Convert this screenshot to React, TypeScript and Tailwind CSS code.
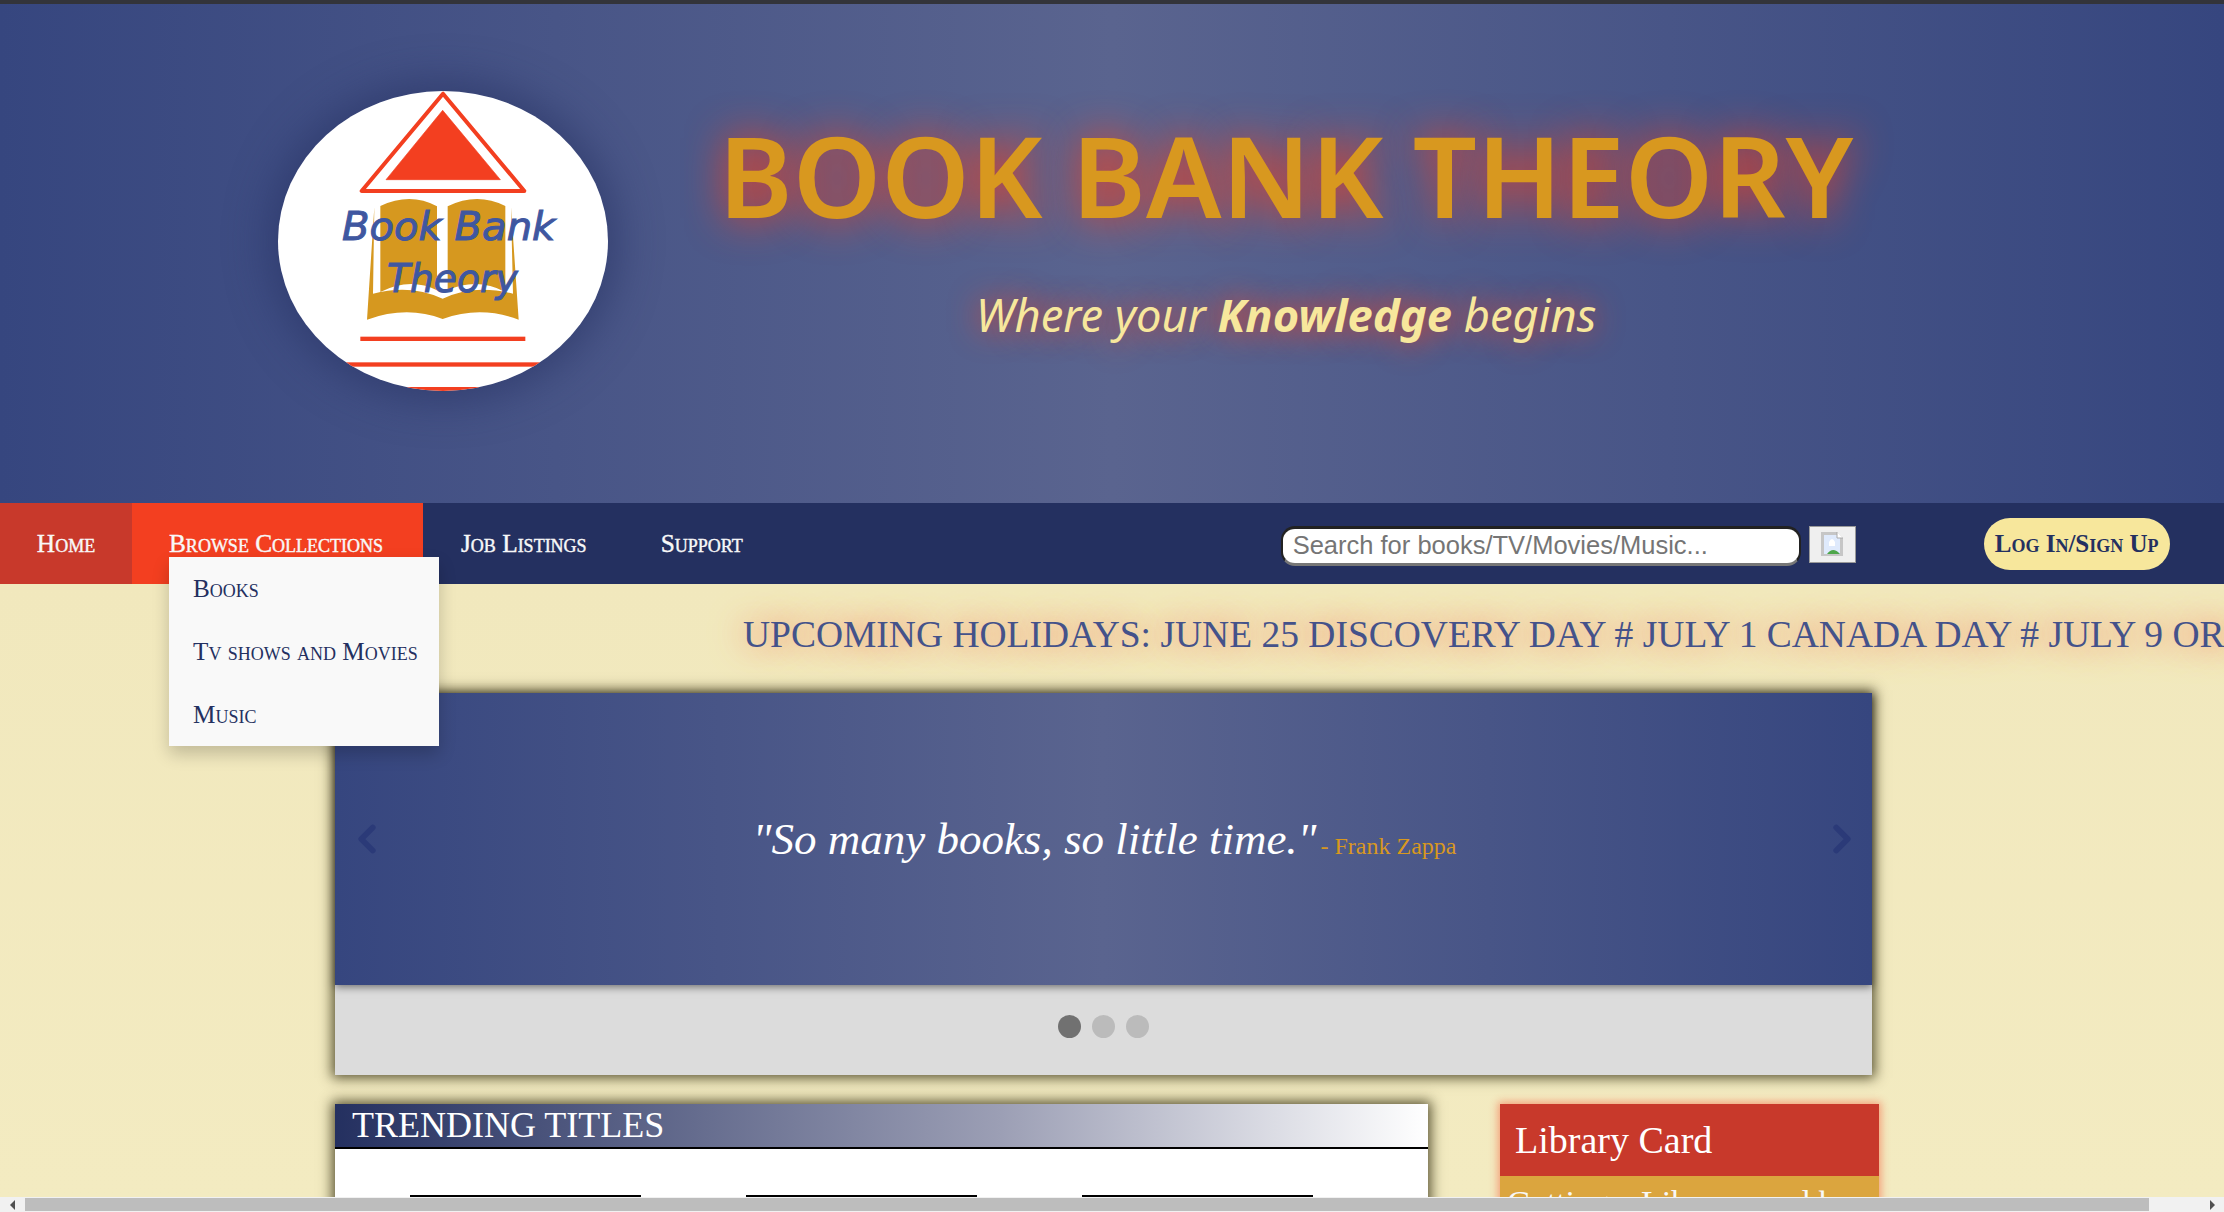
import React from 'react';
import { ChevronLeft, ChevronRight } from 'lucide-react';

const serif = "font-['Liberation_Serif',serif]";

function Logo() {
  return (
    <svg width="330" height="300" viewBox="113 92 990 900" className="shrink-0">
      <defs>
        <clipPath id="logo-clip">
          <ellipse cx="608" cy="542" rx="495" ry="450" />
        </clipPath>
      </defs>
      <g clipPath="url(#logo-clip)">
        <rect x="113" y="92" width="990" height="900" fill="#fff" />
        <path d="M608 100 L364 392 L852 392 Z" fill="none" stroke="#f33f20" strokeWidth="12" strokeLinejoin="round" />
        <path d="M607 150 L437 358 L780 358 Z" fill="#f33f20" stroke="#f33f20" strokeWidth="2" strokeLinejoin="round" />
        {/* book */}
        <path d="M402 440 L380 778 Q500 735 607 776 Q720 735 835 778 L812 440 L818 700 Q700 670 607 715 Q510 670 398 700 Z" fill="#d6981f" />
        <path d="M420 437 Q510 395 590 438 L590 690 Q510 650 420 695 Z" fill="#d6981f" />
        <path d="M622 438 Q710 395 795 437 L795 695 Q710 650 622 690 Z" fill="#d6981f" />
        <rect x="360" y="829" width="495" height="13" fill="#f33f20" />
        <rect x="113" y="906" width="990" height="13" fill="#f33f20" />
        <rect x="113" y="980" width="990" height="14" fill="#f33f20" />
        <text x="305" y="540" fontSize="118" textLength="640" lengthAdjust="spacingAndGlyphs" fill="#3f57a0" stroke="#3f57a0" strokeWidth="3" fontStyle="italic" fontFamily="'DejaVu Sans', sans-serif">Book Bank</text>
        <text x="440" y="695" fontSize="118" textLength="392" lengthAdjust="spacingAndGlyphs" fill="#3f57a0" stroke="#3f57a0" strokeWidth="3" fontStyle="italic" fontFamily="'DejaVu Sans', sans-serif">Theory</text>
      </g>
    </svg>
  );
}

function BrokenImage() {
  return (
    <svg width="24" height="26" viewBox="0 0 24 26">
      <path d="M1 1 H17 L23 7 V25 H1 Z" fill="#c6c6c6" />
      <rect x="4" y="4" width="16" height="19" fill="#dfeafc" />
      <path d="M9 11 Q12 5 15 11 V15 H9 Z" fill="#fff" />
      <path d="M7 23 Q13 15 20 23 Z" fill="#4da64a" />
      <path d="M17 1 V7 H23" fill="#fff" stroke="#aaa" />
    </svg>
  );
}

const navItemClass = 'flex items-center text-[25.3px] font-normal text-[#f8f8f8] [font-variant:small-caps] [-webkit-text-stroke:0.4px_#f8f8f8]';

export default function App() {
  return (
    <div className={`flex h-[1212px] w-[2224px] flex-col overflow-hidden bg-[#f3ebc1] ${serif}`}>
      <div className="h-[4px] bg-[#33343a]" />

      {/* Header */}
      <header className="flex h-[499px] bg-[linear-gradient(to_right,#36467f,#5a648f_50%,#36467f)]">
        <div className="ml-[278px] mt-[87px] h-[300px] rounded-[50%] shadow-[0_0_40px_10px_rgba(36,48,96,0.55)]">
          <Logo />
        </div>
        <div className="ml-[114px] flex w-[1128px] flex-col items-center font-['Noto_Sans',sans-serif]">
          <h1 className="mt-[96px] whitespace-nowrap text-[112.5px] font-semibold leading-[150px] text-[#d8981f] [text-shadow:0_0_40px_#f33f20]">
            BOOK BANK THEORY
          </h1>
          <p className="mt-[37px] whitespace-nowrap text-[45.3px] italic leading-[56px] text-[#f7e79c] [text-shadow:0_0_30px_#f33f20]">
            Where your <span className="font-bold">Knowledge</span> begins
          </p>
        </div>
      </header>

      {/* Nav */}
      <nav className="relative z-10 flex h-[81px] bg-[#243060]">
        <div className={`${navItemClass} w-[132px] justify-center`}>
          <span className="flex h-full w-full items-center justify-center bg-[#c8392b]">Home</span>
        </div>
        <div className={`${navItemClass} relative w-[291px] justify-start bg-[#f33f20] pl-[37px]`}>
          Browse Collections
          <ul className="absolute left-[37px] top-[54px] h-[189px] w-[270px] bg-[#f9f9f9] pl-[24px] text-[25.2px] font-normal text-[#243060] shadow-[0_8px_16px_rgba(0,0,0,0.2)] [-webkit-text-stroke:0]">
            <li className="flex h-[63px] items-center">Books</li>
            <li className="flex h-[63px] items-center whitespace-nowrap">Tv shows and Movies</li>
            <li className="flex h-[63px] items-center">Music</li>
          </ul>
        </div>
        <div className={`${navItemClass} ml-[38px]`}>Job Listings</div>
        <div className={`${navItemClass} ml-[74px]`}>Support</div>

        <div className="ml-[538px] flex items-center pt-[4px]">
          <div className="flex h-[40px] w-[520px] items-center rounded-[14px] border-2 border-t-[3px] border-[#222] border-b-[#777] border-b-[3px] bg-white pl-[10px] font-['Liberation_Sans',sans-serif] text-[25.5px] text-[#757575]">
            Search for books/TV/Movies/Music...
          </div>
          <div className="mb-[3px] ml-[8px] flex h-[37px] w-[47px] items-center justify-center border border-[#999] bg-[#efefef]">
            <BrokenImage />
          </div>
        </div>
        <div className="ml-[128px] flex items-center">
          <div className="flex h-[52px] w-[186px] items-center justify-center rounded-[26px] bg-[#f7e79c] text-[25px] font-bold text-[#243060] [font-variant:small-caps]">
            Log In/Sign Up
          </div>
        </div>
      </nav>

      {/* Main */}
      <main className="min-h-0 flex-1 overflow-hidden bg-[linear-gradient(to_bottom,#f1e8bd,#f3ebc1)]">
        <div className="flex h-[103px] items-center overflow-hidden whitespace-nowrap pl-[743px] text-[37.5px] text-[#44528a] [text-shadow:0_0_24px_#f3a27a,0_0_36px_#f3a27a]">
          UPCOMING HOLIDAYS: JUNE 25 DISCOVERY DAY # JULY 1 CANADA DAY # JULY 9 ORANGEMEN'S DAY
        </div>

        <section className="ml-[335px] mt-[6px] w-[1537px] bg-[#dcdcdc] shadow-[0_0_12px_3px_rgba(50,45,15,0.8)]">
          <div className="flex h-[292px] items-center justify-between bg-[linear-gradient(to_right,#36467f,#5a648f_50%,#36467f)] pl-[9px] pr-[7px] text-[#2b3a78] shadow-[0_2px_8px_rgba(0,0,0,0.5)]">
            <ChevronLeft size={46} strokeWidth={3} />
            <p className="whitespace-nowrap pt-[2px] text-white">
              <span className="text-[45px] italic">"So many books, so little time."</span>
              <span className="ml-[4px] text-[24px] text-[#d8981f]">- Frank Zappa</span>
            </p>
            <ChevronRight size={46} strokeWidth={3} />
          </div>
          <div className="flex h-[90px] items-center justify-center gap-[11px] pb-[8px]">
            <span className="h-[23px] w-[23px] rounded-full bg-[#717171]" />
            <span className="h-[23px] w-[23px] rounded-full bg-[#bbbbbb]" />
            <span className="h-[23px] w-[23px] rounded-full bg-[#bbbbbb]" />
          </div>
        </section>

        <div className="ml-[335px] mt-[29px] flex items-start">
          <section className="h-[200px] w-[1093px] bg-white shadow-[0_0_12px_3px_rgba(50,45,15,0.8)]">
            <h2 className="h-[45px] border-b-2 border-black bg-[linear-gradient(to_right,#243060,#9c9fb5_61%,#ffffff)] pl-[17px] text-[36px] leading-[42px] text-white">
              TRENDING TITLES
            </h2>
            <div className="ml-[75px] mt-[46px] flex gap-[105px]">
              <div className="h-[2px] w-[231px] bg-black" />
              <div className="h-[2px] w-[231px] bg-black" />
              <div className="h-[2px] w-[231px] bg-black" />
            </div>
          </section>
          <aside className="ml-[72px] w-[379px] shadow-[0_0_8px_2px_rgba(243,63,32,0.45)]">
            <h2 className="flex h-[72px] items-center bg-[#c8392b] pl-[15px] text-[38px] text-white">Library Card</h2>
            <p className="h-[100px] whitespace-nowrap bg-[#dba53e] pl-[7px] pt-[1px] text-[34px] text-[#f8f8f8]">Getting a Library card has</p>
          </aside>
        </div>
      </main>

      {/* Browser scrollbar */}
      <div className="flex h-[15px] shrink-0 items-center bg-[#f1f1f1]">
        <div className="flex w-[25px] justify-center">
          <span className="h-0 w-0 border-y-[5px] border-r-[5px] border-y-transparent border-r-[#505050]" />
        </div>
        <div className="h-[13px] w-[2124px] bg-[#bdbdbd]" />
        <div className="flex flex-1 justify-end pr-[9px]">
          <span className="h-0 w-0 border-y-[5px] border-l-[5px] border-y-transparent border-l-[#505050]" />
        </div>
      </div>
    </div>
  );
}
